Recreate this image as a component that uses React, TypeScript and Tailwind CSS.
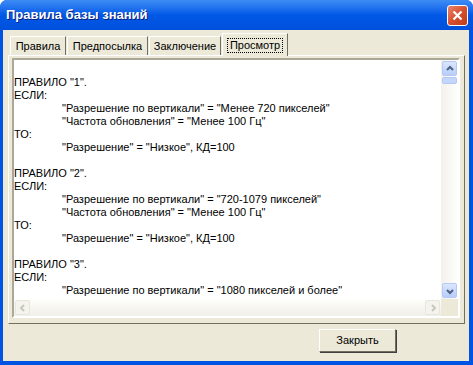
import React from "react";

const lines: { text: string; indent?: boolean }[] = [
  { text: "" },
  { text: 'ПРАВИЛО "1".' },
  { text: "ЕСЛИ:" },
  { text: '"Разрешение по вертикали" = "Менее 720 пикселей"', indent: true },
  { text: '"Частота обновления" = "Менее 100 Гц"', indent: true },
  { text: "ТО:" },
  { text: '"Разрешение" = "Низкое", КД=100', indent: true },
  { text: "" },
  { text: 'ПРАВИЛО "2".' },
  { text: "ЕСЛИ:" },
  { text: '"Разрешение по вертикали" = "720-1079 пикселей"', indent: true },
  { text: '"Частота обновления" = "Менее 100 Гц"', indent: true },
  { text: "ТО:" },
  { text: '"Разрешение" = "Низкое", КД=100', indent: true },
  { text: "" },
  { text: 'ПРАВИЛО "3".' },
  { text: "ЕСЛИ:" },
  { text: '"Разрешение по вертикали" = "1080 пикселей и более"', indent: true },
];

const tabs = ["Правила", "Предпосылка", "Заключение", "Просмотр"];
const tabWidths = ["w-[56px]", "w-[81px]", "w-[72px]", "w-[66px]"];

function Arrow({ dir, disabled }: { dir: "up" | "down" | "left" | "right"; disabled?: boolean }) {
  const d =
    dir === "up"
      ? "M3 7 L6 4 L9 7"
      : dir === "down"
        ? "M3 5 L6 8 L9 5"
        : dir === "left"
          ? "M7 3 L4 6 L7 9"
          : "M5 3 L8 6 L5 9";
  return (
    <svg width="12" height="12" viewBox="0 0 12 12">
      <path d={d} fill="none" stroke={disabled ? "#C9C7BA" : "#4D6185"} strokeWidth="2" />
    </svg>
  );
}

export default function App() {
  return (
    <div
      className="flex h-[365px] w-[473px] flex-col overflow-hidden rounded-t-[7px] bg-[#0054E3] text-[11px] text-black"
      style={{ fontFamily: '"Liberation Sans", Arial, sans-serif' }}
    >
      {/* title bar */}
      <div className="flex h-[30px] shrink-0 items-center justify-between bg-gradient-to-b from-[#3D8CF5] via-[#0058E6] to-[#0050DC] pl-[6px] pr-[5px]">
        <span className="text-[13px] font-bold text-white [text-shadow:1px_1px_0_#0A1E7E]">
          Правила базы знаний
        </span>
        <div className="flex h-[21px] w-[21px] items-center justify-center rounded-[3px] border border-white bg-gradient-to-br from-[#E8866A] via-[#D6502F] to-[#C13A17]">
          <svg width="11" height="11" viewBox="0 0 11 11">
            <path d="M1.5 1.5 L9.5 9.5 M9.5 1.5 L1.5 9.5" stroke="white" strokeWidth="2.2" />
          </svg>
        </div>
      </div>

      {/* body */}
      <div className="ml-[3px] mr-[4px] mb-[4px] flex flex-1 flex-col bg-[#ECE9D8]">
        {/* tabs */}
        <div className="mt-[3px] flex h-[22px] items-end pl-[7px]">
          {tabs.map((t, i) => {
            const active = i === 3;
            return (
              <div
                key={t}
                className={`${tabWidths[i]} mr-px flex items-center justify-center border-l border-t border-r border-l-white border-t-white border-r-[#716F64] ${
                  active ? "relative z-10 -mb-px h-[23px] bg-[#ECE9D8]" : "h-[19px] bg-[#ECE9D8]"
                }`}
              >
                <span className={active ? "border border-dotted border-black px-[2px] leading-[13px]" : "leading-[13px]"}>
                  {t}
                </span>
              </div>
            );
          })}
        </div>

        {/* panel */}
        <div className="ml-[5px] h-[269px] w-[457px] border border-l-white border-t-white border-r-[#716F64] border-b-[#716F64] pl-[3px] pt-[2px]">
          <div className="flex h-[260px] w-[448px] flex-col border-2 border-l-[#ACA899] border-t-[#ACA899] border-r-white border-b-white">
            <div className="flex flex-1 overflow-hidden">
              {/* text */}
              <div className="flex-1 overflow-hidden bg-white pt-[3px]">
                {lines.map((l, i) => (
                  <div
                    key={i}
                    className={`h-[13px] whitespace-nowrap leading-[13px] ${l.indent ? "pl-[48px]" : ""}`}
                  >
                    {l.text || "\u00a0"}
                  </div>
                ))}
              </div>
              {/* vertical scrollbar */}
              <div className="flex w-[17px] flex-col bg-gradient-to-r from-[#F3F1EC] to-[#FEFEFB]">
                <div className="m-px flex h-[15px] items-center justify-center rounded-[2px] border border-[#B3C8F5] bg-gradient-to-b from-[#DCE6FD] to-[#B7CDFB]">
                  <Arrow dir="up" />
                </div>
                <div className="mx-px h-[7px] rounded-[2px] border border-[#B3C8F5] bg-[#C5D6FC]" />
                <div className="flex-1" />
                <div className="m-px flex h-[15px] items-center justify-center rounded-[2px] border border-[#B3C8F5] bg-gradient-to-b from-[#DCE6FD] to-[#B7CDFB]">
                  <Arrow dir="down" />
                </div>
              </div>
            </div>
            {/* horizontal scrollbar */}
            <div className="flex h-[17px] shrink-0">
              <div className="flex flex-1 items-center bg-gradient-to-b from-[#FEFEFB] to-[#F0EFE8]">
                <div className="m-px flex h-[15px] w-[15px] items-center justify-center rounded-[2px] border border-[#E8E6DC] bg-[#F4F3EE]">
                  <Arrow dir="left" disabled />
                </div>
                <div className="flex-1" />
                <div className="m-px flex h-[15px] w-[15px] items-center justify-center rounded-[2px] border border-[#E8E6DC] bg-[#F4F3EE]">
                  <Arrow dir="right" disabled />
                </div>
              </div>
              <div className="w-[17px] bg-[#ECE9D8]" />
            </div>
          </div>
        </div>

        {/* footer */}
        <div className="flex flex-1 items-start justify-end pr-[73px] pt-[5px]">
          <button
            type="button"
            className="flex h-[23px] w-[77px] items-center justify-center border border-l-white border-t-white border-r-[#716F64] border-b-[#716F64] bg-[#ECE9D8] text-[11px] shadow-[1px_1px_0_#404040]"
          >
            Закрыть
          </button>
        </div>
      </div>
    </div>
  );
}
